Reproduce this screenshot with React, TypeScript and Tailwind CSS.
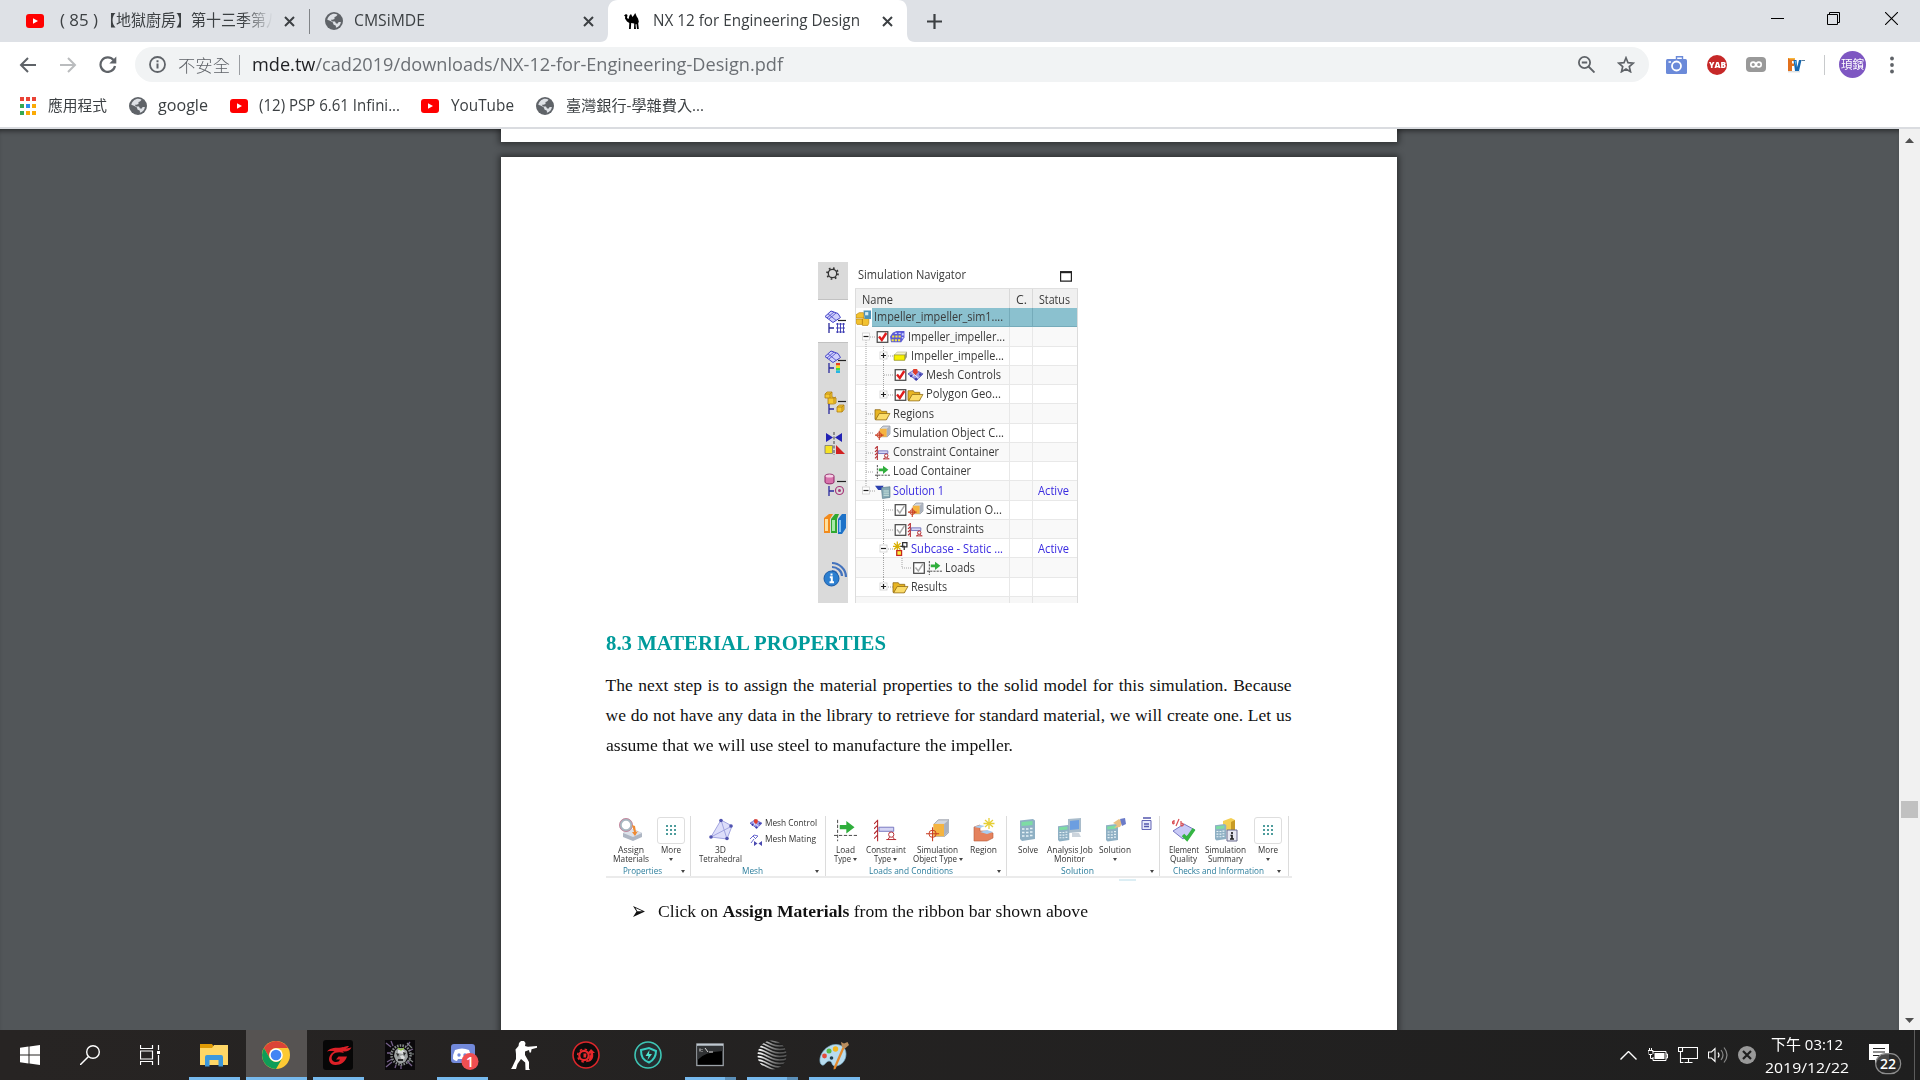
import React, { useLayoutEffect, useRef, useState } from "react";
import type { ReactNode } from "react";

const UI = "font-['Open_Sans','Noto_Sans_CJK_TC',sans-serif]";
const SERIF = "font-['Liberation_Serif',serif]";

/** Single line of text squeezed or stretched to a known width. */
function Fit({ w, className = "", children }: { w: number; className?: string; children: ReactNode }) {
  const ref = useRef<HTMLSpanElement>(null);
  const [k, setK] = useState(1);
  useLayoutEffect(() => {
    if (ref.current && ref.current.offsetWidth) setK(w / ref.current.getBoundingClientRect().width);
  }, [w]);
  return (
    <span className={`block shrink-0 whitespace-nowrap ${className}`} style={{ width: w }}>
      <span ref={ref} className="inline-block origin-left" style={{ transform: `scaleX(${k})` }}>
        {children}
      </span>
    </span>
  );
}

function Svg({ w, h, vb, className = "", children }: { w: number; h: number; vb?: string; className?: string; children: ReactNode }) {
  return (
    <svg width={w} height={h} viewBox={vb ?? `0 0 ${w} ${h}`} fill="none" className={`block shrink-0 ${className}`}>
      {children}
    </svg>
  );
}

/* ---------- browser chrome ---------- */

const Youtube = ({ className = "" }: { className?: string }) => (
  <Svg w={18} h={14} className={className}>
    <rect width="18" height="14" rx="3" fill="#f00" />
    <path d="M7 4.2v5.6L12 7z" fill="#fff" />
  </Svg>
);

const Globe = ({ className = "" }: { className?: string }) => (
  <Svg w={18} h={18} vb="0 0 18 18" className={className}>
    <circle cx="9" cy="9" r="9" fill="#5f6368" />
    <path d="M7 2.2c2-.7 4-.3 5.600.6L11 4.600 9.500 5v2l-2 .8H5.800L7 9.500h3l1 2h1.800l.8-1.600h2.300c-.3 2.900-2.300 5.200-5 5.900v-2L8.500 12.500l-.6-2L5 8.700 2.300 7.800C2.700 5.200 4.600 3 7 2.200z" fill="#dee1e6" />
  </Svg>
);

const Close = ({ className = "" }: { className?: string }) => (
  <Svg w={11} h={11} className={className}>
    <path d="M1 1l9 9M10 1l-9 9" stroke="#3c4043" strokeWidth="2" />
  </Svg>
);

const Camel = () => (
  <Svg w={16} h={16} className="ml-[16px]">
    <path d="M0 2.500L2 1l1.500 1-.5 3 1.500 1L5.500 2.500 7 1l1.500 3L10 2l1.200-2 1.500 3.500L14 5.500l.8 3-.6 2 .6 5.500H13l-.5-5-1 .5.500 4.500H10l.2-5.500-3-.5-.4 6H5l.3-6L3 8.500 1 5.500 1.200 3.500z" fill="#000" />
  </Svg>
);

function TabStrip() {
  return (
    <div className="flex h-[42px] items-center bg-[#dee1e6] text-[15.5px] text-[#3c4043]">
      <Youtube className="ml-[26px]" />
      <div className="ml-[16px] flex w-[222px] gap-[3px] [mask-image:linear-gradient(to_right,#000_82%,transparent_96%)]">
        <Fit w={38}>( 85 )</Fit>
        <Fit w={180}>【地獄廚房】第十三季第八</Fit>
      </div>
      <Close className="ml-[2px]" />
      <div className="ml-[14px] h-[25px] w-px bg-[#808387]" />
      <Globe className="ml-[15px]" />
      <Fit w={71} className="ml-[11px]">CMSiMDE</Fit>
      <Close className="ml-[158px]" />
      <Svg w={315} h={42} className="-mr-[315px] ml-[6px]">
        <path d="M0 42c6 0 8-4 8-9V10C8 4 12 0 18 0h280c6 0 9 4 9 10v23c0 5 2 9 8 9z" fill="#fff" />
      </Svg>
      <div className="relative flex items-center pl-[8px]">
        <Camel />
        <Fit w={207} className="ml-[13px]">NX 12 for Engineering Design</Fit>
        <Close className="ml-[22px]" />
      </div>
      <Svg w={15} h={15} className="relative ml-[34px]">
        <path d="M7.500 0v15M0 7.500h15" stroke="#3c4043" strokeWidth="2.200" />
      </Svg>
      <Svg w={13} h={13} className="ml-auto">
        <path d="M0 3.500h13" stroke="#000" />
      </Svg>
      <Svg w={13} h={13} className="ml-[43px] mt-[-5px]">
        <path d="M.5 2.500h10v10H.5zM2.500 2.500v-2h10v10h-2" stroke="#000" />
      </Svg>
      <Svg w={13} h={13} className="ml-[45px] mr-[22px] mt-[-5px]">
        <path d="M0 0l13 13M13 0L0 13" stroke="#000" strokeWidth="1.100" />
      </Svg>
    </div>
  );
}

function Toolbar() {
  return (
    <div className="flex h-[45px] items-center bg-white text-[18.5px]">
      <Svg w={17} h={16} className="ml-[19px]">
        <path d="M17 8H2M9 1L2 8l7 7" stroke="#5f6368" strokeWidth="2" />
      </Svg>
      <Svg w={17} h={16} className="ml-[24px]">
        <path d="M0 8h15M8 1l7 7-7 7" stroke="#babcbe" strokeWidth="2" />
      </Svg>
      <Svg w={18} h={17} className="ml-[22px]">
        <path d="M14.500 4A7.300 7.300 0 1 0 16 10" stroke="#5f6368" strokeWidth="2.200" />
        <path d="M17.300.5v7h-7z" fill="#5f6368" />
      </Svg>
      <div className="ml-[18px] flex h-[35px] w-[1514px] items-center rounded-full bg-[#f1f3f4]">
        <Svg w={17} h={17} className="ml-[14px]">
          <circle cx="8.500" cy="8.500" r="7.500" stroke="#5f6368" strokeWidth="1.800" />
          <path d="M8.500 7.500v5M8.500 4.300v2" stroke="#5f6368" strokeWidth="2" />
        </Svg>
        <Fit w={52} className="ml-[12px] text-[17.5px] font-light leading-[32px] text-[#5f6368]">不安全</Fit>
        <div className="ml-[9px] h-[20px] w-px bg-[#9a9da1]" />
        <Fit w={531} className="-mt-[2px] ml-[12px] text-[#6b6f74]">
          <span className="text-[#202124]">mde.tw</span>/cad2019/downloads/NX-12-for-Engineering-Design.pdf
        </Fit>
        <Svg w={17} h={17} className="ml-auto">
          <circle cx="6.500" cy="6.500" r="5.600" stroke="#5f6368" strokeWidth="1.800" />
          <path d="M3.800 6.500h5.400M10.500 10.500l6 6" stroke="#5f6368" strokeWidth="1.900" />
        </Svg>
        <Svg w={18} h={17} className="ml-[22px] mr-[14px]">
          <path d="M9 1.800l2 4.900 5.300.4-4 3.500 1.200 5.100L9 13l-4.500 2.700 1.200-5.100-4-3.500L7 6.700z" stroke="#5f6368" strokeWidth="1.700" />
        </Svg>
      </div>
      <Svg w={21} h={18} className="ml-[17px]">
        <rect y="3" width="21" height="15" rx="1.500" fill="#6b8ad9" />
        <path d="M10.500 3V.7h6V3" stroke="#6b8ad9" strokeWidth="1.400" />
        <circle cx="10.500" cy="10" r="4.500" stroke="#fff" strokeWidth="1.800" />
        <path d="M2.500 6h2.500" stroke="#fff" strokeWidth="1.500" />
      </Svg>
      <div className="ml-[20px] flex size-[20px] items-center justify-center rounded-full bg-[#c62828] text-white">
        <Fit w={17} className="text-[8px] font-extrabold leading-[20px]">YAB</Fit>
      </div>
      <Svg w={20} h={15} className="ml-[19px]">
        <rect width="20" height="15" rx="4" fill="#999" />
        <circle cx="7.200" cy="7.500" r="2.400" stroke="#fff" strokeWidth="1.600" />
        <circle cx="12.800" cy="7.500" r="2.400" stroke="#fff" strokeWidth="1.600" />
      </Svg>
      <Svg w={18} h={16} className="ml-[21px]">
        <path d="M1 1h7l-.5 3H5v2.500h2.500L7 9H5v5H1z" fill="#e2701c" />
        <path d="M1 1h7v1.500H3z" fill="#f6b73c" />
        <path d="M6.500 3h3l.8 7L12 3h2.500L12 14H8z" fill="#1467b0" />
        <path d="M7.500 4H9l.6 7z" fill="#5fb8ef" />
        <path d="M14.500 3.500H18" stroke="#5a7f9c" />
        <path d="M1 14.800h12" stroke="#cfd3d6" />
      </Svg>
      <div className="ml-[19px] h-[20px] w-px bg-[#c8cacc]" />
      <div className="ml-[14px] flex size-[27px] items-center justify-center rounded-full bg-[#7e57c2] text-[12px] text-white">
        <Fit w={23}>頊鑌</Fit>
      </div>
      <Svg w={4} h={18} className="ml-[24px]">
        <circle cx="2" cy="2.500" r="1.900" fill="#5f6368" />
        <circle cx="2" cy="9" r="1.900" fill="#5f6368" />
        <circle cx="2" cy="15.500" r="1.900" fill="#5f6368" />
      </Svg>
    </div>
  );
}

const APP_DOTS = ["#ea4335", "#ea4335", "#ea4335", "#34a853", "#2a8cf0", "#fbaa05", "#34a853", "#fbaa05", "#fbaa05"];

function Bookmarks() {
  return (
    <div className="flex h-[42px] items-center border-b-2 border-[#dadce0] bg-white pb-[4px] pt-[1px] text-[15.5px] text-[#3c4043]">
      <div className="ml-[20px] grid grid-cols-3 gap-x-[2px] gap-y-[3px]">
        {APP_DOTS.map((c, i) => (
          <div key={i} className="size-[4px]" style={{ backgroundColor: c }} />
        ))}
      </div>
      <Fit w={59} className="ml-[12px] text-[14.5px]">應用程式</Fit>
      <Globe className="ml-[22px]" />
      <Fit w={50} className="ml-[11px]">google</Fit>
      <Youtube className="ml-[22px]" />
      <Fit w={141} className="ml-[11px]">(12) PSP 6.61 Infini...</Fit>
      <Youtube className="ml-[21px]" />
      <Fit w={63} className="ml-[12px]">YouTube</Fit>
      <Globe className="ml-[22px]" />
      <Fit w={138} className="ml-[12px] text-[14.5px]">臺灣銀行-學雜費入...</Fit>
    </div>
  );
}

/* ---------- simulation navigator ---------- */

type Kind = "sim" | "fem" | "box" | "mesh" | "folder" | "simobj" | "constr" | "load" | "sol" | "sub";

/** Small symbols on a 14 x 14 grid, shared by the tree and the ribbon; s scales the line weight. */
function Glyph({ kind, s = 1 }: { kind: Kind; s?: number }) {
  switch (kind) {
    case "sim":
      return (
        <g>
          <path d="M0 4l3-2h4v5H0zM0 8h6v5H1L0 12zM7 7h5v5l-1 2H6V8z" fill="#f2c230" stroke="#b98410" strokeWidth=".6" />
          <path d="M7 0h7v8H8z" fill="#4c93b8" />
          <path d="M8.500 1.500h3v3h-3z" fill="#d7eef3" />
        </g>
      );
    case "fem":
      return (
        <g>
          <path d="M0 6.500L2.500 3 6 1.500h7.500v6L10.500 12H1z" fill="#5a5ad8" />
          <path d="M2 5.500h2v2H2zM5 5.500h2v2H5zM8 5.500h2v2H8zM1.500 9h2v2h-2zM4.500 9h2v2h-2zM7.500 9h2v2h-2z" fill="#f5e63c" />
          <path d="M4.500 3h2v1.300h-2zM8 3h2v1.300H8zM11 3.500h1.800v2H11zM11 7h1.500v1.500H11z" fill="#c9d0ff" />
        </g>
      );
    case "box":
      return (
        <g>
          <path d="M1 6l3-3h9v5l-2 3H1z" fill="#9a9a80" />
          <path d="M1 6h10v5H1z" fill="#f7f000" stroke="#8d8d1a" strokeWidth=".6" />
          <path d="M1.500 5.500L4 3.500h8.500L11 5.500z" fill="#f3f3c8" />
        </g>
      );
    case "mesh":
      return (
        <g>
          <path d="M0 6l6-4 8 4-6 6z" fill="#9a9ae6" stroke="#4b4bb5" strokeWidth=".8" />
          <path d="M3 4l7 6M9 3.500L4 9" stroke="#fff" strokeWidth=".8" />
          <path d="M5 1.500h3.500l.8 3-2.300 2.700L4.500 4.700z" fill="#e03c2c" />
          <circle cx="3" cy="8" r="1.200" fill="#3838a8" />
          <circle cx="11.500" cy="6.500" r="1.200" fill="#3838a8" />
          <circle cx="7.500" cy="11" r="1.200" fill="#3838a8" />
        </g>
      );
    case "folder":
      return (
        <g>
          <path d="M0 12V3h5l1 1.500h5V12z" fill="#e8b523" stroke="#8a6410" strokeWidth=".7" />
          <path d="M.5 12.500L4 6.500h10l-3.500 6z" fill="#fbdc6a" stroke="#8a6410" strokeWidth=".7" />
        </g>
      );
    case "simobj":
      return (
        <g>
          <path d="M5 3l2.500-2.500H14V8l-2.500 2.500H5z" fill="#d3d7de" stroke="#777f8c" strokeWidth={0.6 * s} />
          <path d="M4.500 3h6.500v7.500H4.500z" fill="#f5b440" />
          <path d="M11 3l2.700-2.200V7.800L11 10.300z" fill="#aab1bd" />
          <path d="M0 9h8M4 5v8.500" stroke="#c83c22" strokeWidth={s} />
          <circle cx="4" cy="9" r="2.200" stroke="#c83c22" strokeWidth={0.9 * s} />
        </g>
      );
    case "constr":
      return (
        <g>
          <path d="M2.200.5v13M0 3l2-2M0 6l2-2M0 9l2-2M0 12l2-2" stroke="#b3282e" strokeWidth={s} />
          <path d="M3 5h9v2.500H3z" fill="#d4d4f4" stroke="#6a6ab8" strokeWidth={0.8 * s} />
          <circle cx="10.500" cy="9.500" r="1.600" stroke="#b3282e" strokeWidth={0.9 * s} />
          <path d="M7.500 12.500h6M9.500 11l-1 1.500M11.500 11l1 1.500" stroke="#b3282e" strokeWidth={0.9 * s} />
        </g>
      );
    case "load":
      return (
        <g>
          <path d="M2.200.5v13M0 10h14" stroke="#444" strokeWidth={0.9 * s} strokeDasharray="2 1" />
          <path d="M3.500 3.700h4V1.200L12.500 5 7.500 8.800V6.300h-4z" fill="#2fae3c" />
        </g>
      );
    case "sol":
      return (
        <g>
          <path d="M0 2h8L6 6H3z" fill="#2b3fae" />
          <path d="M6 4l8-1v10l-7 1z" fill="#86a9b4" stroke="#56788a" strokeWidth=".6" />
          <path d="M8 7h5M8 9h5M8 11h5" stroke="#d6f0e6" strokeWidth=".8" />
        </g>
      );
    default:
      return (
        <g>
          <path d="M4 0v9M0 4.500h8M1 1.500l6 6M7 1.500l-6 6" stroke="#d8ae00" strokeWidth="1.200" />
          <path d="M9 1h4v4H9zM7 4.500h3.500v3.500" stroke="#333" strokeWidth="1.200" />
          <rect x="3.500" y="8.500" width="4.500" height="4.500" fill="#f8ef3f" stroke="#c8281e" strokeWidth="1.200" />
        </g>
      );
  }
}

interface Row {
  text: string;
  x: number;
  w: number;
  icon: Kind;
  exp?: [number, string];
  check?: [number, "on" | "grey"];
  lines: string;
  active?: boolean;
}

/* x values are measured from the left edge of the table */
const ROWS: Row[] = [
  { text: "Impeller_impeller_sim1....", x: 18, w: 129, icon: "sim", lines: "" },
  { text: "Impeller_impeller...", x: 52, w: 97, icon: "fem", exp: [10, "-"], check: [20.5, "on"], lines: "M10 13v7M14 10h5" },
  { text: "Impeller_impelle...", x: 55, w: 93, icon: "box", exp: [27.500, "+"], lines: "M10 0v20M27.500 0v20M32 10h5" },
  { text: "Mesh Controls", x: 70, w: 75, icon: "mesh", check: [38.5, "on"], lines: "M10 0v20M27.500 0v20M28 10h9" },
  { text: "Polygon Geo...", x: 70, w: 75, icon: "folder", exp: [27.500, "+"], check: [38.5, "on"], lines: "M10 0v20M27.500 0v6M32 10h5" },
  { text: "Regions", x: 37, w: 41, icon: "folder", lines: "M10 0v20M10 10h8" },
  { text: "Simulation Object C...", x: 37, w: 111, icon: "simobj", lines: "M10 0v20M10 10h8" },
  { text: "Constraint Container", x: 37, w: 106, icon: "constr", lines: "M10 0v20M10 10h8" },
  { text: "Load Container", x: 37, w: 78, icon: "load", lines: "M10 0v20M10 10h8" },
  { text: "Solution 1", x: 37, w: 51, icon: "sol", exp: [10, "-"], lines: "M10 0v6M14 10h5", active: true },
  { text: "Simulation O...", x: 70, w: 76, icon: "simobj", check: [38.5, "grey"], lines: "M27.500 0v20M28 10h9" },
  { text: "Constraints", x: 70, w: 58, icon: "constr", check: [38.5, "grey"], lines: "M27.500 0v20M28 10h9" },
  { text: "Subcase - Static ...", x: 55, w: 92, icon: "sub", exp: [27.500, "-"], lines: "M27.500 0v6M27.500 14v6M32 10h5", active: true },
  { text: "Loads", x: 89, w: 30, icon: "load", check: [57, "grey"], lines: "M27.500 0v20M46 0v10M46 10h9" },
  { text: "Results", x: 55, w: 36, icon: "folder", exp: [27.500, "+"], lines: "M27.500 0v6M32 10h5" },
];

function TreeRow({ row, i }: { row: Row; i: number }) {
  const bg = i === 0 ? "bg-[#8bc1cf]" : i % 2 ? "bg-[#f9f9f9]" : "bg-white";
  const edge = i === 0 ? "border-[#75abba]" : "border-[#e8e8e8]";
  const color = row.active ? "text-[#3a2be0]" : "text-[#3a3a3a]";
  const [ex, sign] = row.exp ?? [0, ""];
  const [cx, state] = row.check ?? [0, ""];
  return (
    <div className={`flex h-[19.27px] items-center border-b ${bg} ${edge} ${color}`}>
      <div className={`flex h-full w-[154px] shrink-0 items-center border-r ${edge}`}>
        <Svg w={row.x} h={19} vb={`0 0 ${row.x} 19`}>
          {i === 0 && <path d="M0 0h16v19H0z" fill="#fff" />}
          <path d={row.lines} stroke="#a5a5a5" strokeDasharray="1 1" />
          {row.exp && (
            <g>
              <rect x={ex - 3.5} y="6" width="7" height="7" fill="#fff" stroke="#cfcfcf" strokeWidth=".8" />
              <path d={sign === "+" ? `M${ex - 2.5} 9.500h5M${ex} 7v5` : `M${ex - 2.5} 9.500h5`} stroke="#222" strokeWidth="1.200" />
            </g>
          )}
          {row.check && (
            <g transform={`translate(${cx} 4)`}>
              <rect x=".7" y=".7" width="10.600" height="10.600" fill="#fff" stroke="#444" strokeWidth="1.200" />
              <path d="M2.500 5.500l2.800 3.500 4.500-7" stroke={state === "on" ? "#e01e1e" : "#a8a8a8"} strokeWidth={state === "on" ? 2.4 : 1.4} />
            </g>
          )}
          <g transform={`translate(${row.x - 18} 2.500) scale(1.070)`}>
            <Glyph kind={row.icon} />
          </g>
        </Svg>
        <Fit w={row.w}>{row.text}</Fit>
      </div>
      <div className={`h-full w-[23px] shrink-0 border-r ${edge}`} />
      <div className="flex h-full flex-1 items-center pl-[5px]">{row.active && <Fit w={31}>Active</Fit>}</div>
    </div>
  );
}

const MeshSheet = () => (
  <g>
    <path d="M0 6.500L6 1l7 2.500 2.500 4L8 12.500z" fill="#cfcffb" stroke="#4444c8" strokeWidth="1" />
    <path d="M3 3.800l8 6.500M4 9l7-6M2 8l7-6" stroke="#4444c8" strokeWidth=".8" />
    <path d="M13 10.500h8" stroke="#222" strokeWidth="1.200" />
  </g>
);

function SideIcons() {
  return (
    <div className="h-[341px] w-[30.5px] shrink-0 bg-[#dadada]">
      <Svg w={30} h={37}>
        <circle cx="14.500" cy="11.500" r="4.200" stroke="#333" strokeWidth="1.300" />
        <circle cx="14.500" cy="11.500" r="5.500" stroke="#333" strokeWidth="1.700" strokeDasharray="1.700 2.600" />
      </Svg>
      <div className="h-[44px] border-y border-[#c2c2c2] bg-white">
        <Svg w={30} h={42} vb="-7 -10 30 42">
          <MeshSheet />
          <path d="M4 13v10M4 18h5" stroke="#2a2a9c" strokeWidth="1.300" />
          <path d="M11 14h9M11 18h9M11 22h9M12.500 13v10M18.500 13v10M15.500 13v10" stroke="#3333b0" strokeWidth=".9" />
        </Svg>
      </div>
      <Svg w={30} h={41} vb="-7 -7 30 41">
        <MeshSheet />
        <path d="M4 13v10M4 18h5" stroke="#2a2a9c" strokeWidth="1.300" />
        <path d="M11 13h4v2.500h-4z" fill="#e84020" />
        <path d="M11 15.500h4V18h-4z" fill="#f4e022" />
        <path d="M11 18h4v2.500h-4z" fill="#3fd94c" />
        <path d="M11 20.500h4V23h-4z" fill="#25b4e6" />
      </Svg>
      <Svg w={30} h={41} vb="-7 -7 30 41">
        <path d="M0 3l2-2h5v5l4 1v5l-2 1H3V7H0z" fill="#f6c931" stroke="#b07f12" strokeWidth=".8" />
        <path d="M0 3h5v4M5 3l2-2M3 7h6v5M9 7l2-1" stroke="#b07f12" strokeWidth=".8" />
        <path d="M13 10.500h8" stroke="#222" strokeWidth="1.200" />
        <path d="M4 13v10M4 18h5" stroke="#2a2a9c" strokeWidth="1.300" />
        <path d="M12 16l2.500-2H19v4.500L17 21h-5z" fill="#f6c931" stroke="#b07f12" strokeWidth=".8" />
        <path d="M12 16h5v5M17 16l2-2" stroke="#b07f12" strokeWidth=".8" />
      </Svg>
      <Svg w={30} h={41} vb="-7 -7 30 41">
        <path d="M1 1l7 4.500L1 10zM17 1l-7 4.500 7 4.500z" fill="#2222b4" />
        <path d="M9 0v23" stroke="#444" strokeDasharray="3 1.500" />
        <path d="M0 13.500h7.500v8H0z" fill="#f6e223" stroke="#777" strokeWidth=".8" />
        <path d="M11 13v9h9z" fill="#d12020" />
      </Svg>
      <Svg w={30} h={41} vb="-7 -7 30 41">
        <path d="M0 3c0-2.500 9-2.500 9 0v6c0 2.500-9 2.500-9 0z" fill="#d873ac" stroke="#8c2464" />
        <ellipse cx="4.500" cy="3" rx="4" ry="1.600" fill="#f3d0e4" />
        <path d="M12 8.500h9" stroke="#222" strokeWidth="1.200" />
        <path d="M4 13v10M4 18h5" stroke="#2a2a9c" strokeWidth="1.300" />
        <circle cx="14.500" cy="17.500" r="4" stroke="#a63879" strokeWidth="1.200" />
        <circle cx="14.500" cy="17.500" r="1.500" fill="#a63879" />
      </Svg>
      <Svg w={30} h={41} vb="-6 -6 30 41">
        <path d="M0 5l5-4h4l-3 5v14l-6 0z" fill="#f28a1c" />
        <path d="M1 6h3v12H1z" fill="#ffdf9c" />
        <path d="M7 6l4-5h4l-2 5v14H7z" fill="#30a830" />
        <path d="M8 7h3v11H8z" fill="#a8eaa8" />
        <path d="M14 6l4-5h4v14l-4 6h-4z" fill="#1d72c8" />
        <path d="M15 7h2v12h-2z" fill="#7fc0f2" />
      </Svg>
      <Svg w={30} h={50} vb="-6 -15 30 50">
        <path d="M8 0c7 0 14 6 14 14M8 4c5 0 10 4 10 9M8 8c3 0 5 2 5 5" stroke="#4473bd" strokeWidth="2.200" />
        <circle cx="7.500" cy="15.500" r="7.500" fill="#2c7fd0" stroke="#1d5ba5" />
        <path d="M7.500 10.500v2M5.800 14.300h2v5M5.500 19.300h4.500" stroke="#fff" strokeWidth="2" />
      </Svg>
    </div>
  );
}

function Navigator() {
  return (
    <div className={`flex h-[341px] w-[260px] overflow-hidden text-[11.7px] text-[#3a3a3a] ${UI}`}>
      <SideIcons />
      <div className="ml-[7px] w-[222.5px]">
        <div className="flex h-[27px] items-center border-b border-[#e0e0e0]">
          <Fit w={108} className="ml-[3px]">Simulation Navigator</Fit>
          <Svg w={12} h={11} className="ml-auto mr-[6px] mt-[2px]">
            <path d="M.6.8h10.800v9.400H.6z" stroke="#222" strokeWidth="1.200" />
            <path d="M0 1.200h12" stroke="#222" strokeWidth="2" />
          </Svg>
        </div>
        <div className="h-[314px] border-x border-[#dcdcdc]">
          <div className="flex h-[19px] items-center bg-[#f0f0f0]">
            <div className="flex h-full w-[154px] items-center border-r border-[#d9d9d9] pl-[6px] pt-[2px]">
              <Fit w={31}>Name</Fit>
            </div>
            <div className="flex h-full w-[23px] items-center border-r border-[#d9d9d9] pl-[6px] pt-[2px]">
              <Fit w={11}>C.</Fit>
            </div>
            <Fit w={31} className="ml-[6px] pt-[2px]">Status</Fit>
          </div>
          {ROWS.map((r, i) => (
            <TreeRow key={i} row={r} i={i} />
          ))}
          <div className="flex h-[6px] bg-[#f7f7f7]">
            <div className="w-[154px] border-r border-[#e4e4e4]" />
            <div className="w-[23px] border-r border-[#e4e4e4]" />
          </div>
        </div>
      </div>
    </div>
  );
}

/* ---------- ribbon ---------- */

const Caret = () => <span className="inline-block h-0 w-0 border-x-[2px] border-t-[3px] border-x-transparent border-t-[#444]" />;

function Cmd({ w, icon, a, aw, b, bw, caret }: { w: number; icon: ReactNode; a: string; aw: number; b?: string; bw?: number; caret?: boolean }) {
  return (
    <div className="flex shrink-0 flex-col items-center" style={{ width: w }}>
      <div className="flex h-[28px] items-center">{icon}</div>
      <Fit w={aw} className="h-[10px] leading-[11px]">{a}</Fit>
      <div className="flex h-[10px] items-center gap-[2px]">
        {b && <Fit w={bw ?? 20} className="leading-[10px]">{b}</Fit>}
        {caret && <Caret />}
      </div>
    </div>
  );
}

function Group({ w, label, lw, lx, cx, children }: { w: number; label: string; lw: number; lx: number; cx: number; children: ReactNode }) {
  return (
    <div className="h-[60px] shrink-0" style={{ width: w }}>
      <div className="flex h-[50px] border-r border-[#dcdcdc]">{children}</div>
      <div className="flex h-[10px] items-center border-r border-[#dcdcdc] text-[#2b7d9c]">
        <span className="block" style={{ width: lx }} />
        <Fit w={lw} className="leading-[12px]">{label}</Fit>
        <span className="block" style={{ width: cx - lx - lw - 3 }} />
        <Caret />
      </div>
    </div>
  );
}

const Big = ({ kind }: { kind: Kind }) => (
  <Svg w={23} h={23} vb="0 0 14 14">
    <Glyph kind={kind} s={0.65} />
  </Svg>
);

const MoreBox = () => (
  <div className="grid h-[27px] w-[28px] grid-cols-[repeat(3,2px)] place-content-center gap-[2px] rounded-[3px] border border-[#dedede]">
    {Array.from({ length: 9 }, (_, i) => (
      <span key={i} className="block size-[2px] bg-[#4e9c9c]" />
    ))}
  </div>
);

const Calc = () => (
  <g>
    <path d="M0 1.500L13 0l2 1.500V20L2 22l-2-2z" fill="#8fb0c4" />
    <path d="M1.500 3l11-1v4l-11 1z" fill="#7ddca4" />
    <path d="M2 10h2.500M6 10h2.500M10 9.500h2.500M2 13.500h2.500M6 13.500h2.500M10 13h2.500M2 17h2.500M6 17h2.500M10 16.500h2.500" stroke="#e6f1f6" strokeWidth="1.500" />
  </g>
);

function Ribbon() {
  return (
    <div className={`flex h-[62px] w-[686px] border-b-2 border-[#ebebeb] text-[8.5px] font-medium text-[#333] ${UI}`}>
      <Group w={85} label="Properties" lw={39} lx={17} cx={78}>
        <div className="w-[4px]" />
        <Cmd w={44} a="Assign" aw={26} b="Materials" bw={36} icon={
          <Svg w={24} h={24}>
            <path d="M4 15l10-4 9 4v4l-9 4-10-4z" fill="#aeb6c3" />
            <path d="M4 15l10-4 9 4-9 4z" fill="#dde2ea" />
            <circle cx="7" cy="7" r="5.500" stroke="#a8b9c2" strokeWidth="2.500" />
            <circle cx="7" cy="7" r="6.500" stroke="#c66a86" strokeWidth=".7" />
            <path d="M13 7l3 1 1 6 2-1-3 5-3-4h2z" fill="#f08b32" />
          </Svg>
        } />
        <Cmd w={37} a="More" aw={20} caret icon={<MoreBox />} />
      </Group>
      <Group w={135} label="Mesh" lw={21} lx={51} cx={127}>
        <div className="w-[6px]" />
        <Cmd w={48} a="3D" aw={11} b="Tetrahedral" bw={43} icon={
          <Svg w={24} h={24}>
            <path d="M12 2L2 19l16 2L23 8z" fill="#dddefa" stroke="#a2a5e0" />
            <path d="M12 2l6 19M2 19L23 8" stroke="#a2a5e0" />
            {[[12, 2.5], [2, 19], [18, 20.500], [22, 8]].map(([x, y]) => <circle key={x} cx={x} cy={y} r="1.800" fill="#5053b0" />)}
          </Svg>
        } />
        <div className="ml-[5px] flex flex-col">
          <div className="flex h-[15px] items-center gap-[3px]">
            <Svg w={12} h={12} vb="0 0 14 14"><Glyph kind="mesh" /></Svg>
            <Fit w={52}>Mesh Control</Fit>
          </div>
          <div className="flex h-[17px] items-center gap-[3px]">
            <Svg w={12} h={12}>
              <path d="M0 5l4-4 4 1-3 3M1 9l3-4M3 2l3 3" stroke="#6b6bd0" />
              <path d="M4 7v5l3.500-2.500zM12 7v5L8.500 9.500z" fill="#4a4ab0" />
            </Svg>
            <Fit w={51}>Mesh Mating</Fit>
          </div>
        </div>
      </Group>
      <Group w={181} label="Loads and Conditions" lw={84} lx={43} cx={174}>
        <div className="w-[1px]" />
        <Cmd w={38} a="Load" aw={19} b="Type" bw={17} caret icon={<Big kind="load" />} />
        <Cmd w={42} a="Constraint" aw={40} b="Type" bw={17} caret icon={<Big kind="constr" />} />
        <Cmd w={62} a="Simulation" aw={41} b="Object Type" bw={44} caret icon={<Big kind="simobj" />} />
        <Cmd w={30} a="Region" aw={27} icon={
          <Svg w={24} h={24}>
            <path d="M2 9l6-2v6h7l6 2v5l-6 3H2z" fill="#e5825d" stroke="#b65c3b" strokeWidth=".6" />
            <path d="M2 9l6-2 5 1-5 2zM8 14l7-2 6 2-6 2z" fill="#a8cdf1" />
            <path d="M17 0v11M11.500 5.500h11M13 2l8 7M21 2l-8 7" stroke="#e6cf35" strokeWidth="1.300" />
          </Svg>
        } />
      </Group>
      <Group w={153} label="Solution" lw={33} lx={54} cx={146}>
        <div className="w-[5px]" />
        <Cmd w={32} a="Solve" aw={20} icon={<Svg w={16} h={23}><Calc /></Svg>} />
        <Cmd w={52} a="Analysis Job" aw={46} b="Monitor" bw={31} icon={
          <Svg w={24} h={24}>
            <path d="M10 1l13-1v14l-13 1z" fill="#a9bccb" />
            <path d="M12 3l9-1v9l-9 1z" fill="#6c9ee0" />
            <path d="M14 15h7l2 4h-9z" fill="#ccd4dc" />
            <g transform="translate(0 7) scale(.75)"><Calc /></g>
          </Svg>
        } />
        <Cmd w={39} a="Solution" aw={32} caret icon={
          <Svg w={24} h={24}>
            <g transform="translate(3 6) scale(.8)"><Calc /></g>
            <path d="M10 5l6-4 4 3-3 5-6 1 3-3z" fill="#eac083" />
            <path d="M17 1l5-1 1 6-4 2z" fill="#6b7bc8" />
          </Svg>
        } />
        <Svg w={11} h={13} className="ml-[6px] mt-[1px]">
          <path d="M1 3.500h9v9H1z" fill="#e5e8fb" stroke="#6265b5" />
          <path d="M2 1h8M3 7h5M3 9.500h5" stroke="#5457ad" strokeWidth="1.500" />
        </Svg>
      </Group>
      <Group w={129} label="Checks and Information" lw={91} lx={13} cx={120}>
        <div className="w-[5px]" />
        <Cmd w={40} a="Element" aw={30} b="Quality" bw={27} icon={
          <Svg w={24} h={24}>
            <path d="M1 13L12 6l11 6-12 9z" fill="#c9caf6" stroke="#7779c4" />
            <path d="M2 2v4M2 6c-2 0-2-3 0-3M4 8l3-7M9 3v5M9 8c3 0 3-3 0-3" stroke="#d94b50" strokeWidth="1.200" />
            <path d="M11 17l4 4 7-10" stroke="#35b543" strokeWidth="3.500" />
          </Svg>
        } />
        <Cmd w={44} a="Simulation" aw={41} b="Summary" bw={35} icon={
          <Svg w={24} h={24}>
            <path d="M9 3l8-3 4 2v10H9z" fill="#f4cf52" />
            <path d="M17 4l4-2v10h-4z" fill="#c89b26" />
            <g transform="translate(1 6) scale(.75)"><Calc /></g>
            <path d="M13 12h10v11H13z" fill="#e9e9f2" stroke="#66688c" />
            <path d="M18 14v2M16.500 17.500H18V21M16 21h4" stroke="#222" strokeWidth="1.700" />
          </Svg>
        } />
        <Cmd w={40} a="More" aw={20} caret icon={<MoreBox />} />
      </Group>
    </div>
  );
}

/* ---------- PDF viewer ---------- */

function Viewer() {
  return (
    <div className="flex h-[901px]">
      <div className="flex h-[901px] w-[1899px] flex-col overflow-hidden bg-[#525659] pl-[501px] shadow-[inset_0_5px_5px_-3px_rgba(0,0,0,0.5)]">
        <div className="h-[13px] w-[896px] shrink-0 bg-white shadow-[0_0_6px_2px_rgba(0,0,0,0.45)]" />
        <div className={`mt-[15px] h-[900px] w-[896px] shrink-0 bg-white text-[17.5px] text-[#111] shadow-[0_0_6px_2px_rgba(0,0,0,0.45)] ${SERIF}`}>
          <div className="pl-[316.5px] pt-[105px]">
            <Navigator />
          </div>
          <div className="pl-[104.5px]">
            <Fit w={280} className="mt-[25px] h-[30px] text-[20px] font-bold leading-[30px] text-[#009b9b]">8.3 MATERIAL PROPERTIES</Fit>
            <div className="mt-[12px] h-[90px] w-[686px] leading-[30px]">
              <div className="h-[30px] whitespace-nowrap [text-align-last:justify]">The next step is to assign the material properties to the solid model for this simulation. Because</div>
              <div className="h-[30px] whitespace-nowrap [text-align-last:justify]">we do not have any data in the library to retrieve for standard material, we will create one. Let us</div>
              <Fit w={407}>assume that we will use steel to manufacture the impeller.</Fit>
            </div>
            <div className="mt-[56px]">
              <Ribbon />
            </div>
            <div className="ml-[513px] mt-[1px] h-[2px] w-[17px] bg-[#dceef4]" />
            <div className="mt-[15px] flex h-[30px] items-center">
              <Svg w={12} h={11} className="ml-[27px]">
                <path d="M0 0l12 5.500L0 11l3.500-5.500z" fill="#111" />
                <path d="M2.500 2l7 3.200H4.300z" fill="#fff" />
              </Svg>
              <Fit w={430} className="ml-[13px] leading-[30px]">
                Click on <b>Assign Materials</b> from the ribbon bar shown above
              </Fit>
            </div>
          </div>
        </div>
      </div>
      <div className="flex h-[901px] w-[21px] flex-col items-center bg-[#f1f1f1]">
        <Svg w={9} h={5} className="mt-[9px]"><path d="M0 5l4.500-5L9 5z" fill="#505050" /></Svg>
        <div className="mt-[658px] h-[17px] w-[17px] bg-[#c1c1c1]" />
        <Svg w={9} h={5} className="mb-[7px] mt-auto"><path d="M0 0l4.500 5L9 0z" fill="#505050" /></Svg>
      </div>
    </div>
  );
}

/* ---------- taskbar ---------- */

function TaskButton({ bar, active, children }: { bar?: "one" | "many"; active?: boolean; children: ReactNode }) {
  return (
    <div className={`mr-px flex h-[50px] w-[61px] shrink-0 flex-col items-center ${active ? "bg-[#565352]" : ""}`}>
      <div className="flex h-[47px] items-center pr-[2px] pt-[3px]">{children}</div>
      {bar === "one" && <div className={`h-[3px] bg-[#76b9ed] ${active ? "w-[61px]" : "w-[51px]"}`} />}
      {bar === "many" && (
        <div className="flex h-[3px] w-[51px]">
          <div className="w-[40px] bg-[#76b9ed]" />
          <div className="w-[11px] bg-[#5b8fb8]" />
        </div>
      )}
    </div>
  );
}

function Taskbar() {
  return (
    <div className="flex h-[50px] items-center bg-linear-to-r from-[#272423] to-[#1f1f1f]">
      <Svg w={20} h={20} className="ml-[20px]">
        <path d="M0 2.800L8.500 1.600v7.900H0zM9.500 1.500L20 0v9.500H9.500zM0 10.500h8.500v7.900L0 17.200zM9.500 10.500H20V20L9.500 18.500z" fill="#fff" />
      </Svg>
      <Svg w={20} h={20} className="ml-[40px]">
        <circle cx="13" cy="7" r="6.300" stroke="#fff" strokeWidth="1.400" />
        <path d="M8.500 11.500L0 20" stroke="#fff" strokeWidth="1.500" />
      </Svg>
      <Svg w={20} h={20} className="ml-[40px]">
        <path d="M.5 0v3.500h12V0M.5 20v-3.500h12V20M.5 6h12v8H.5zM18.500 0v5M18.500 10v10" stroke="#fff" strokeWidth="1.200" />
        <path d="M17 6h3v3h-3z" fill="#fff" />
      </Svg>
      <div className="ml-[24px] flex">
        <TaskButton bar="one">
          <Svg w={28} h={24}>
            <path d="M0 1h12l2 3-2 2H0z" fill="#e09b05" />
            <path d="M0 5h12l2-3h14v20H0z" fill="#ffd766" />
            <path d="M5 23.500V14q0-2 2-2h14q2 0 2 2v9.500h-4.500V17H9.500v6.500z" fill="#3c98dc" />
          </Svg>
        </TaskButton>
        <TaskButton bar="one" active>
          <Svg w={28} h={28}>
            <circle cx="14" cy="14" r="14" fill="#fcc934" />
            <path d="M1.900 7A14 14 0 0 1 26.100 7H14a7 7 0 0 0-6 10.500z" fill="#db4437" />
            <path d="M1.900 7A14 14 0 0 0 14 28l6.100-10.500A7 7 0 0 1 8 17.500z" fill="#0f9d58" />
            <circle cx="14" cy="14" r="6.800" fill="#fff" />
            <circle cx="14" cy="14" r="5.300" fill="#4285f4" />
          </Svg>
        </TaskButton>
        <TaskButton bar="one">
          <Svg w={30} h={30}>
            <rect width="30" height="30" rx="3" fill="#070707" />
            <path d="M4 11.500C8 7 13 8 18 7.500c3-.3 4-1.500 8-1.500-1 1.500-2 2-3 2.500 2 0 4-.5 5.500-1.200C27 11 23 12 19.500 11.200L21 13c-4-1.500-9-1-11 1.500-2.500 3-1.500 7 2.500 7.500 2 .2 4-.7 4.500-2.500h-4l2.500-3H24c-1.500 5-6 8.500-11.500 8.500C7 25 4.500 20 7 15.500c1-2 2.500-3.200 4.500-4-2.500-.7-5-.5-7.500 0z" fill="#dc2027" />
          </Svg>
        </TaskButton>
        <TaskButton>
          <Svg w={30} h={30}>
            <rect width="30" height="30" fill="#0a080b" />
            <path d="M1 3l5 4M6 1l2 5M25 2l-3 4M28 9l-4 2M2 22l5-3M1 27l6-5M27 26l-5-5M2 13h4M16 29v-4M10 28l1-3" stroke="#75608a" strokeWidth="1.300" />
            <path d="M22 3l5 5M25 14h4M24 19l4 3" stroke="#7f8784" strokeWidth="1.200" />
            <circle cx="16" cy="15" r="9.500" stroke="#85898a" strokeWidth="2.500" strokeDasharray="1.500 1.200" />
            <path d="M10 11l3-3h5l4 3 1 6-3 5-5 2-4-3-2-5z" fill="#9da1a1" />
            <path d="M13 10l4-1 3 3-2 2-5-1zM15 16l3-1 2 3-3 2z" fill="#dcdede" />
            <path d="M11 13l3 1-1 3zM18 12l3 1-2 3zM13 19h5v2h-5z" fill="#2a2a2a" />
            <path d="M13 8l3 2 3-2" stroke="#91c83c" strokeWidth="1.200" />
          </Svg>
        </TaskButton>
        <TaskButton bar="one">
          <Svg w={30} h={30} className="ml-[5px]">
            <path d="M2 7q0-3 3-3h18q3 0 3 3v19l-4-3H5q-3 0-3-3z" fill="#7289da" />
            <path d="M6 10q7-3 14 0 2.500 5 2 9-2 2-4 2l-1-2h-8l-1 2q-2 0-4-2-.5-4 2-9z" fill="#fff" />
            <circle cx="10" cy="15" r="1.700" fill="#7289da" />
            <circle cx="16" cy="15" r="1.700" fill="#7289da" />
            <circle cx="21" cy="21.500" r="8.500" fill="#f04f52" />
            <text x="21" y="26.500" textAnchor="middle" fontSize="14" fontWeight="600" fill="#fff">1</text>
          </Svg>
        </TaskButton>
        <TaskButton>
          <Svg w={26} h={29}>
            <path d="M8 2l2-2h3l1.500 2-.5 3 3 .8L26 5v1.800L20.500 8.200 20 11.500h-1.500l-.5-2.500-4 1.500V14l4 7v6.500l1 1.500h-4.500l-.3-7.500L10 18l-3.500 5L5 28H0l1-1.500L5 18V13l-.5-4.500L7.500 5z" fill="#fff" />
          </Svg>
        </TaskButton>
        <TaskButton>
          <Svg w={28} h={28}>
            <circle cx="14" cy="14" r="13" fill="#0c0c0c" stroke="#dc272b" strokeWidth="1.600" />
            <circle cx="12" cy="14.500" r="4.700" stroke="#e8282c" strokeWidth="2.200" />
            <circle cx="12" cy="14.500" r="6.400" stroke="#e8282c" strokeWidth="1.500" strokeDasharray="2.500 2.500" />
            <path d="M14.500 12.500h-3v4h2.500M19 8l4 4h-2c1 5-1 8-5 9l3-9h-3z" fill="#e8282c" />
          </Svg>
        </TaskButton>
        <TaskButton>
          <Svg w={28} h={28}>
            <circle cx="14" cy="14" r="13" fill="#252d30" stroke="#3ec5b4" strokeWidth="1.600" />
            <path d="M7 9l8-2 7 3c0 6-2 9-7 11.500C9 19 7 16 7 9z" stroke="#38cdc1" strokeWidth="2" />
            <path d="M15.500 9l-4 6h3l-1 4 4.500-6h-3z" fill="#50e4ce" />
          </Svg>
        </TaskButton>
        <TaskButton bar="many">
          <Svg w={28} h={24}>
            <rect x=".8" y="1" width="26.400" height="21.500" fill="#000" stroke="#9ca2a8" strokeWidth="1.300" />
            <path d="M1 1.800h26" stroke="#bfc8d0" strokeWidth="2" />
            <path d="M1.500 3h25v5Q8 9 1.500 17z" fill="#303234" />
            <path d="M4 5.500v3M6 6v.8M6 8v.8M9 5l3 4M13 9h4" stroke="#d8d8d8" />
          </Svg>
        </TaskButton>
        <TaskButton bar="many">
          <Svg w={30} h={30}>
            <defs>
              <clipPath id="ball"><circle cx="15" cy="15" r="14.500" /></clipPath>
              <linearGradient id="shade" x1="0" y1="0" x2=".8" y2="1"><stop stopColor="#fff" /><stop offset="1" stopColor="#555" /></linearGradient>
            </defs>
            <g clipPath="url(#ball)">
              <rect width="30" height="30" fill="#1b1b1b" />
              {[-17.5, -14, -10.5, -7, -3.5, 0, 3.5, 7, 10.5, 14].map((d) => (
                <path key={d} d={`M-1 ${10 + d}C8 ${7 + d} 14 ${21 + d} 31 ${15 + d}`} stroke="url(#shade)" strokeWidth="1.700" />
              ))}
            </g>
          </Svg>
        </TaskButton>
        <TaskButton bar="one">
          <Svg w={30} h={29}>
            <path d="M13 4c8-2 14 2 14 9s-5 12-11 12c-4 0-2-5-6-5-3 0-4 5-7 4-4-2-3-15 10-20z" fill="#b7dcef" stroke="#7fb4d0" strokeWidth=".7" />
            <circle cx="5.500" cy="15" r="2.400" fill="#e34c3c" />
            <circle cx="10" cy="10" r="2.500" fill="#57b947" />
            <circle cx="16.500" cy="8" r="2.700" fill="#f3b61f" />
            <circle cx="12.500" cy="17" r="1.800" fill="#20404e" />
            <path d="M23.500 6l2 1-9 21-2 .5.300-2.500z" fill="#e38a2c" />
            <path d="M22 1l3 1.500L28.500 1l1.500 3-4 3.500-3-1.500z" fill="#b98d5d" />
          </Svg>
        </TaskButton>
      </div>
      <Svg w={17} h={9} className="ml-auto"><path d="M.5 8.500l8-8 8 8" stroke="#fff" strokeWidth="1.400" /></Svg>
      <Svg w={20} h={14} className="ml-[11px]">
        <path d="M4.500 3.500h13.500v9H5V9M18 6h1.500v4H18" stroke="#fff" />
        <path d="M6.500 5h10v6h-10z" fill="#fff" />
        <path d="M0 2.500h5v3l-1 1H1l-1-1zM1.500 0v3M3.500 0v3M2.500 6v4.500H5" stroke="#fff" />
      </Svg>
      <Svg w={20} h={16} className="ml-[10px]">
        <path d="M5 .5h14.500v11H3.500M10.500 12v3M6.500 15.500h8M.5.500h4v4h-4zM2.500 5v10.500h3" stroke="#fff" strokeWidth="1.100" />
      </Svg>
      <Svg w={20} h={16} className="ml-[10px]">
        <path d="M.5 5h3L7 1.500v13L3.500 11h-3z" stroke="#fff" strokeWidth="1.100" />
        <path d="M10 5.500q2 2.500 0 5" stroke="#fff" strokeWidth="1.200" />
        <path d="M13 3q4 5 0 10M16 .5q6 7.500 0 15" stroke="#8a8a8a" strokeWidth="1.200" />
      </Svg>
      <Svg w={18} h={18} className="ml-[10px]">
        <circle cx="9" cy="9" r="9" fill="#999" />
        <path d="M5 5l8 8M13 5l-8 8" stroke="#1f1f1f" strokeWidth="2.200" />
      </Svg>
      <div className="ml-[9px] flex h-[50px] w-[84px] flex-col items-center text-[15px] text-white">
        <Fit w={72} className="mt-[2px] h-[24px] leading-[24px]">下午 03:12</Fit>
        <Fit w={84} className="h-[24px] leading-[22px]">2019/12/22</Fit>
      </div>
      <Svg w={34} h={34} className="ml-[20px] mt-[6px]">
        <path d="M0 3h20v16H9l-3 4v-4H0z" fill="#fff" />
        <path d="M4 7.500h12M4 11h12M4 14.500h9" stroke="#222" strokeWidth="1.200" />
        <rect x="6.700" y="12.700" width="25" height="20" rx="10" fill="#2a2a2a" fillOpacity=".85" stroke="#8d8d8d" strokeWidth="1.200" />
        <text x="19" y="27.500" textAnchor="middle" fontSize="14" fontWeight="600" fill="#fff">22</text>
      </Svg>
      <div className="ml-[11px] mr-[5px] h-[50px] w-px bg-[#5c5c5c]" />
    </div>
  );
}

export default function App() {
  return (
    <div className={`h-[1080px] w-[1920px] overflow-hidden bg-white ${UI}`}>
      <TabStrip />
      <Toolbar />
      <Bookmarks />
      <Viewer />
      <Taskbar />
    </div>
  );
}
